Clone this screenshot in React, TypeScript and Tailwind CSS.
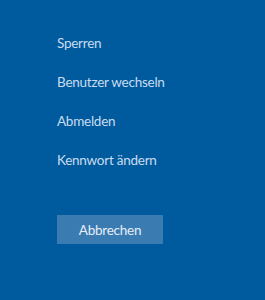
import React from "react";

export default function App() {
  const items = ["Sperren", "Benutzer wechseln", "Abmelden", "Kennwort ändern"];
  return (
    <div
      className="w-[265px] h-[300px] bg-[#005a9e] pl-[57px] pt-[33px] flex flex-col"
      style={{ fontFamily: 'Lato, "Open Sans", sans-serif' }}
    >
      {items.map((t) => (
        <div key={t} className="h-[39px] text-[13.5px] tracking-[-0.25px] leading-[20px] text-[#c9dcef]">
          {t}
        </div>
      ))}
      <button className="mt-[26px] w-[106px] h-[29px] bg-[#3a7bb2] text-[13.5px] tracking-[-0.25px] leading-[20px] text-[#e6eef7] flex items-center justify-center">
        Abbrechen
      </button>
    </div>
  );
}
